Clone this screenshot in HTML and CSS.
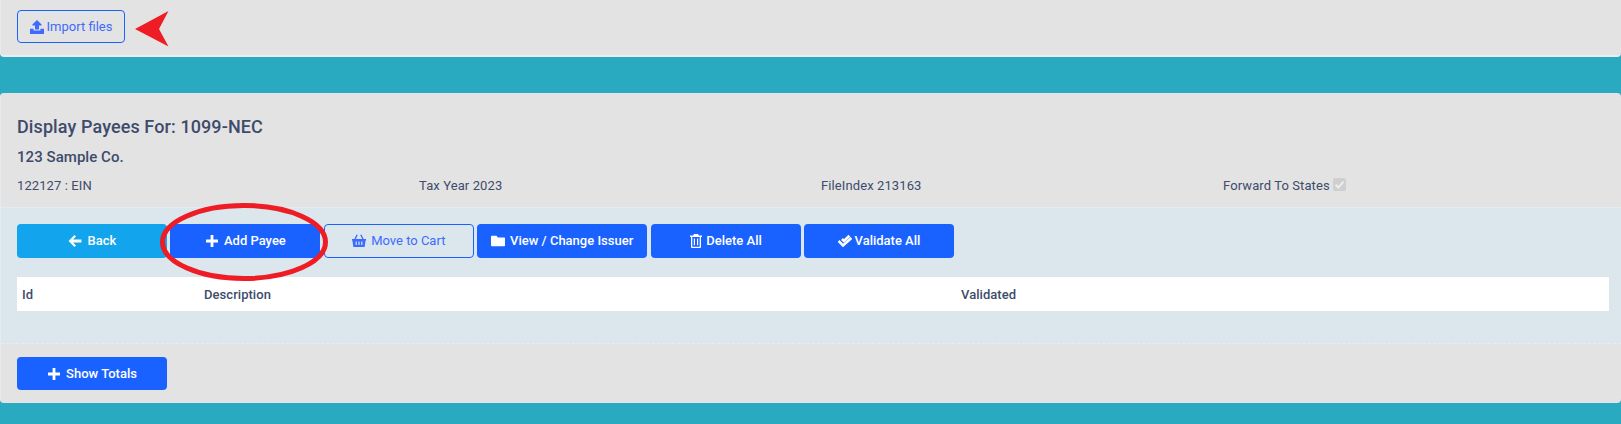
FILE: index.html
```html
<!DOCTYPE html>
<html lang="en">
<head>
<meta charset="utf-8">
<title>Display Payees</title>
<link rel="stylesheet" href="styles.css">
</head>
<body>
<section class="card card-top">
  <button class="btn btn-outline btn-import">
    <svg class="ico" viewBox="1 1 14 14"><path d="M8 1 3.4 5.6V6.6H6V10.6H10V6.6H12.6V5.6Z"/><path d="M1 9.8H4.6V11.6H11.4V9.8H15V15H1Z"/></svg>
    Import files
  </button>
  <svg class="arrow" viewBox="0 0 34 36"><path d="M0 18 33.5 0 24 18 33.5 35.5Z"/></svg>
</section>
<div class="gap"></div>
<section class="card card-main">
  <header class="head">
    <h1 class="title">Display Payees For: 1099-NEC</h1>
    <h2 class="company">123 Sample Co.</h2>
    <div class="meta">
      <span>122127 : EIN</span>
      <span>Tax Year 2023</span>
      <span>FileIndex 213163</span>
      <span class="states">Forward To States <i class="check"><svg viewBox="0 0 13 13"><path d="M2.6 6.8 5.3 9.6 10.6 3.6" /></svg></i></span>
    </div>
  </header>
  <div class="panel">
    <div class="actions">
      <button class="btn btn-info w150 gap-wide">
        <svg class="ico" viewBox="1 1 14 14"><path d="M7.4 2 1.6 8 7.4 14 9 12.4 6 9.4H14.4V6.6H6L9 3.6Z"/></svg>
        Back
      </button>
      <button class="btn btn-primary w150">
        <svg class="ico" viewBox="1 1 14 14"><path d="M6.6 2H9.4V6.6H14V9.4H9.4V14H6.6V9.4H2V6.6H6.6Z"/></svg>
        Add Payee
      </button>
      <button class="btn btn-outline w150">
        <svg class="ico" viewBox="1 1 14 14"><path fill-rule="evenodd" d="M5.6 1.4 6.8 2 4.8 6H11.2L9.2 2 10.4 1.4 12.7 6H15.4V7.4H14.6L13.6 14H2.4L1.4 7.4H.6V6H3.3ZM4.6 8.4V12H5.8V8.4ZM7.4 8.4V12H8.6V8.4ZM10.2 8.4V12H11.4V8.4Z"/></svg>
        Move to Cart
      </button>
      <button class="btn btn-primary w170">
        <svg class="ico" viewBox="1 1 14 14"><path d="M1.8 2.8H6.4L8 4.4H14.2Q15 4.4 15 5.2V12.4Q15 13.2 14.2 13.2H1.8Q1 13.2 1 12.4V3.6Q1 2.8 1.8 2.8Z"/></svg>
        View / Change Issuer
      </button>
      <button class="btn btn-primary w150 gap-tight">
        <svg class="ico" viewBox="1 1 14 14"><path fill-rule="evenodd" d="M6 1H10L11 2.6H14V4H13V14Q13 15 12 15H4Q3 15 3 14V4H2V2.6H5ZM4.3 4V13.7H11.7V4ZM5.8 5.4H7V12.3H5.8ZM9 5.4H10.2V12.3H9Z"/></svg>
        Delete All
      </button>
      <button class="btn btn-primary w150 gap-tight">
        <svg class="ico stroked" viewBox="1 1 14 14"><path d="M1.6 8 6 12.4 14.4 5"/><path d="M5 6 7 8 12.4 2.8"/></svg>
        Validate All
      </button>
    </div>
    <table class="grid">
      <thead>
        <tr><th class="col-id">Id</th><th class="col-desc">Description</th><th>Validated</th></tr>
      </thead>
    </table>
  </div>
  <footer class="foot">
    <button class="btn btn-primary w150">
      <svg class="ico" viewBox="1 1 14 14"><path d="M6.6 2H9.4V6.6H14V9.4H9.4V14H6.6V9.4H2V6.6H6.6Z"/></svg>
      Show Totals
    </button>
  </footer>
</section>
<svg class="ring" viewBox="0 0 170 80"><ellipse cx="84" cy="39" rx="81.5" ry="36.5"/></svg>
</body>
</html>
```
FILE: styles.css
```css
* { box-sizing: border-box; }
html, body { margin: 0; padding: 0; }
body {
  position: relative;
  width: 1621px;
  height: 424px;
  overflow: hidden;
  background: #2aaac0;
  font-family: Roboto, "Liberation Sans", sans-serif;
  font-size: 13px;
  color: #3e4b6b;
}
.card {
  background: #e3e3e3;
  border-left: 1px solid #e6ebf2;
}
.card-top {
  display: flex;
  align-items: flex-start;
  gap: 10px;
  height: 57px;
  padding: 10px 16px 0;
  border-bottom: 2px solid #e9eef2;
  border-radius: 0 0 4px 4px;
}
.gap { height: 36px; }
.card-main {
  border-radius: 4px;
  height: 310px;
  display: flex;
  flex-direction: column;
}
.head { height: 114px; padding: 22px 16px 0; }
.title { margin: 0; font-size: 18px; line-height: 24px; font-weight: 500; letter-spacing: .1px; }
.company { margin: 8px 0 0; font-size: 15px; line-height: 20px; font-weight: 500; letter-spacing: .05px; }
.meta {
  display: grid;
  grid-template-columns: repeat(4, 402px);
  margin-top: 10px;
  line-height: 17px;
  letter-spacing: .1px;
}
.states { display: flex; align-items: center; gap: 3px; }
.check {
  display: block;
  width: 13px;
  height: 13px;
  margin-top: -3px;
  background: #cfcfcf;
  border-radius: 2px;
}
.check svg { display: block; fill: none; stroke: #eeeeee; stroke-width: 2; }
.panel {
  height: 137px;
  padding: 16px 16px 0;
  background: #dbe7ec;
  border-top: 1px solid #e3ecf2;
  border-bottom: 1px dashed #e6eef4;
}
.actions { display: flex; align-items: stretch; gap: 3.4px; height: 34px; }
.btn {
  display: inline-flex;
  align-items: center;
  justify-content: center;
  gap: 5px;
  height: 34px;
  padding: 0;
  border: 1px solid transparent;
  border-radius: 4px;
  font: 500 13px/16px Roboto, "Liberation Sans", sans-serif;
}
.gap-wide { gap: 6px; }
.gap-tight { gap: 3px; }
.ico { width: 14px; height: 14px; fill: currentColor; flex: none; }
.stroked { fill: none; stroke: currentColor; stroke-width: 2.6; }
.btn-primary { background: #1a62ff; color: #fff; }
.btn-info { background: #12a5ee; color: #fff; }
.btn-outline { background: transparent; color: #3d6bff; border-color: #1a62ff; font-weight: 400; }
.btn-import { width: 108px; height: 33px; gap: 3px; }
.w150 { width: 150px; }
.w170 { width: 170px; }
.arrow { width: 34px; height: 36px; fill: #ee1c25; flex: none; margin-top: 1px; }
.grid {
  width: 1592px;
  margin-top: 19px;
  background: #fff;
  border-collapse: collapse;
  table-layout: fixed;
}
.grid th {
  height: 34px;
  padding: 0 5px;
  text-align: left;
  font-weight: 500;
  font-size: 13px;
  letter-spacing: .05px;
}
.col-id { width: 182px; }
.col-desc { width: 757px; }
.foot { padding: 13px 16px 0; }
.foot .btn { height: 33px; }
.ring {
  position: absolute;
  left: 160px;
  top: 203px;
  width: 170px;
  height: 80px;
  fill: none;
  stroke: #ee1c25;
  stroke-width: 5;
}
```
